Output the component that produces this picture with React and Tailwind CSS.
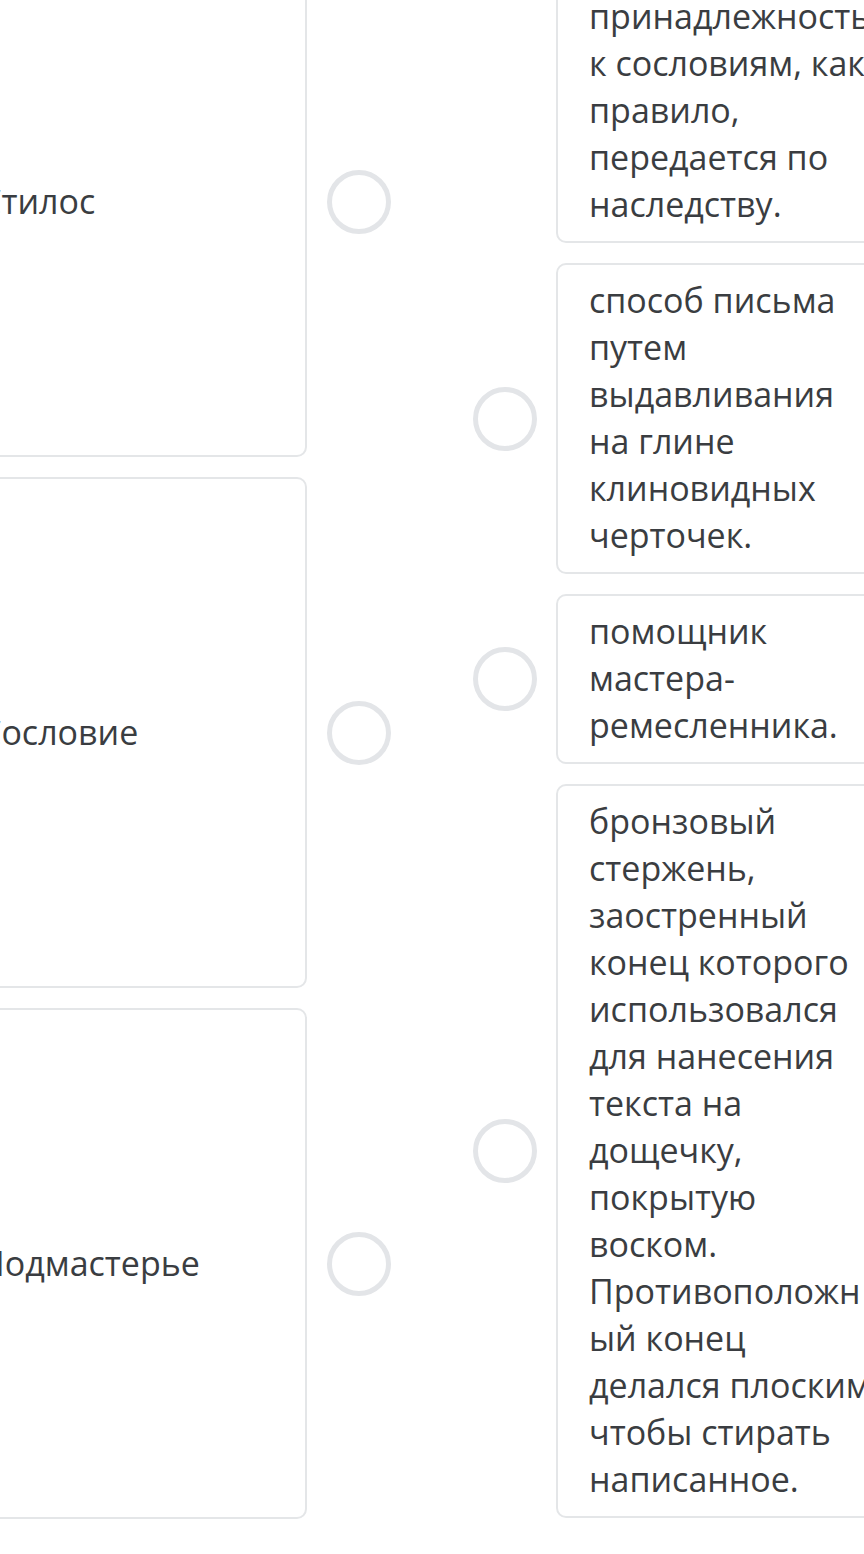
import React from "react";

const leftItems = ["Стилос", "Сословие", "Подмастерье"];

const rightItems = [
    [
        "большая группа",
        "людей, которые",
        "имеют права и",
        "обязанности,",
        "закрепленные в",
        "обычаях или",
        "законах;",
        "принадлежность",
        "к сословиям, как",
        "правило,",
        "передается по",
        "наследству.",
    ],
    [
        "способ письма",
        "путем",
        "выдавливания",
        "на глине",
        "клиновидных",
        "черточек.",
    ],
    ["помощник", "мастера-", "ремесленника."],
    [
        "бронзовый",
        "стержень,",
        "заостренный",
        "конец которого",
        "использовался",
        "для нанесения",
        "текста на",
        "дощечку,",
        "покрытую",
        "воском.",
        "Противоположн",
        "ый конец",
        "делался плоским,",
        "чтобы стирать",
        "написанное.",
    ],
];

const Circle = () => (
    <div className="w-[64px] h-[64px] shrink-0 rounded-full border-[5px] border-[#e3e5e8] bg-white" />
);

const App = () => {
    return (
        <div className="w-[864px] h-[1554px] overflow-hidden bg-white font-['Open_Sans',sans-serif] text-[#3a3d41] text-[34px]">
            <div className="flex items-start">
                {/* left side: terms */}
                <div className="flex flex-col gap-[20px] ml-[-53px] mt-[-54px] shrink-0">
                    {leftItems.map((term) => (
                        <div key={term} className="flex items-center gap-[20px]">
                            <div className="w-[360px] h-[511px] shrink-0 flex items-center pl-[31px] border-2 border-[#e4e6e8] rounded-[10px] leading-[47px]">
                                {term}
                            </div>
                            <Circle />
                        </div>
                    ))}
                </div>

                {/* right side: definitions */}
                <div className="flex flex-col gap-[20px] ml-[82px] mt-[-350px] shrink-0">
                    {rightItems.map((lines, index) => (
                        <div key={index} className="flex items-center gap-[19px]">
                            <Circle />
                            <div className="w-[420px] shrink-0 pl-[31px] pt-[12px] pb-[13px] border-2 border-[#e4e6e8] rounded-[10px] leading-[47px]">
                                {lines.map((line, i) => (
                                    <div key={i} className="whitespace-nowrap">
                                        {line}
                                    </div>
                                ))}
                            </div>
                        </div>
                    ))}
                </div>
            </div>
        </div>
    );
};

export default App;
